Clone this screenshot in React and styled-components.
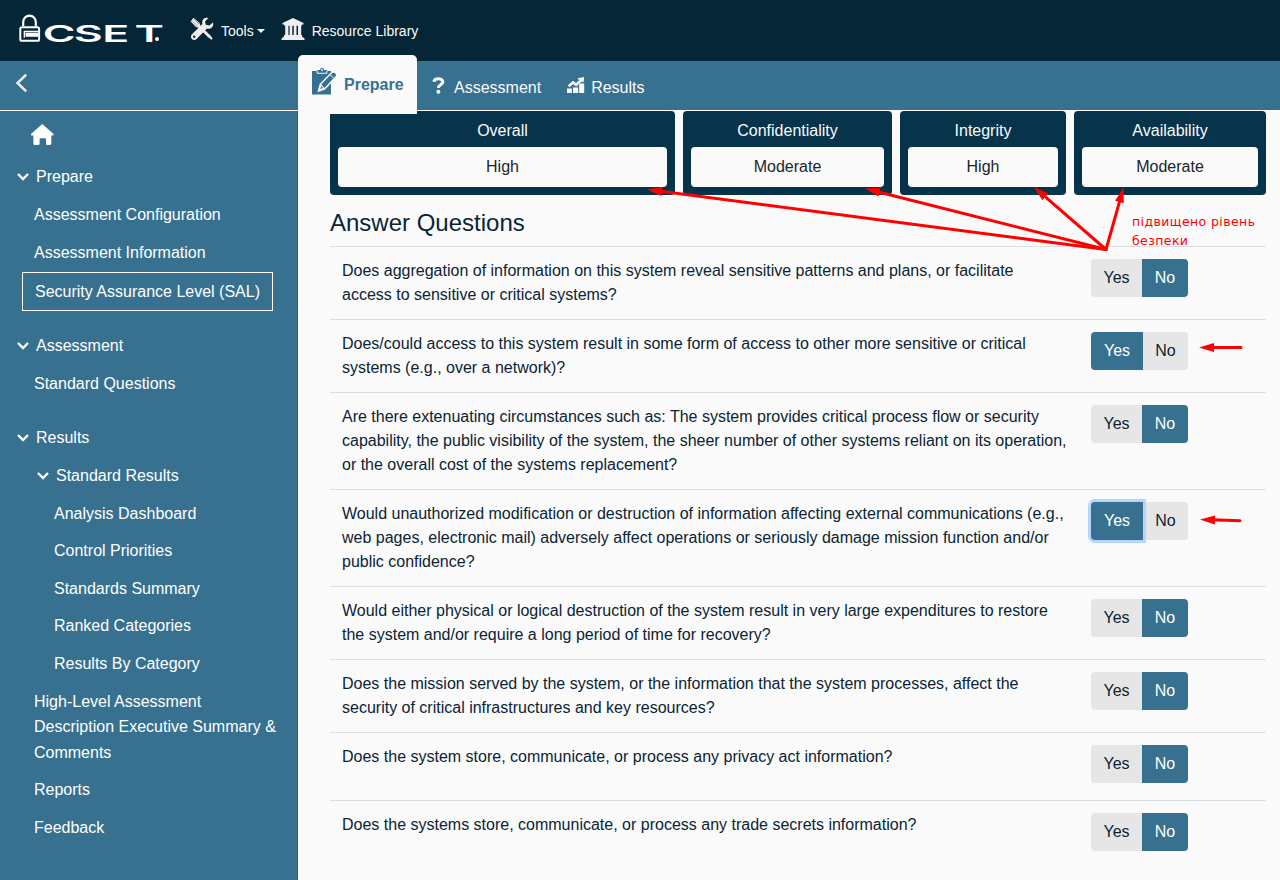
import React from "react";
import styled, { createGlobalStyle, css } from "styled-components";

const color = {
  header: "#042636",
  bar: "#37718f",
  card: "#07344b",
  page: "#fafafa",
  ink: "#0b2434",
  grey: "#e6e6e6",
  rule: "#dcdfe2",
  mark: "#ff0000",
};

const GlobalStyle = createGlobalStyle`
  *, *::before, *::after { box-sizing: border-box; }
  body {
    margin: 0;
    background: ${color.page};
    color: ${color.ink};
    font: 16px/24px "Liberation Sans", Arial, sans-serif;
  }
  svg { display: block; flex: none; }
`;

const Page = styled.div`
  position: relative;
  display: flex;
  flex-direction: column;
  width: 1280px;
  height: 880px;
  overflow: hidden;
`;

const Header = styled.header`
  display: flex;
  align-items: center;
  height: 61px;
  padding-left: 18px;
  background: ${color.header};
  color: ${color.page};
  font-size: 14px;
`;

const HeaderLink = styled.a`
  display: flex;
  align-items: center;
  height: 61px;
  padding-left: ${(p) => p.$left}px;
  gap: ${(p) => p.$gap}px;
  white-space: nowrap;
`;

const HeaderIcon = styled.span`
  padding-bottom: 3px;
`;

const Caret = styled.span`
  margin: 1px 0 0 3px;
  border: 4px solid transparent;
  border-top-color: ${color.page};
  border-bottom: 0;
`;

const ToolsLabel = styled.span`
  display: flex;
  align-items: center;
`;

const Bar = styled.nav`
  display: flex;
  height: 50px;
  background: ${color.bar};
  border-bottom: 1px solid #fff;
  color: ${color.page};
`;

const Collapse = styled.div`
  width: 298px;
  padding: 12px 0 0 15px;
`;

const Tab = styled.div`
  display: flex;
  align-items: center;
  height: 49px;
  gap: ${(p) => p.$gap}px;
  padding: 4px 0 0 ${(p) => p.$left}px;
  ${(p) =>
    p.$active &&
    css`
      z-index: 1;
      width: 119px;
      height: 59px;
      margin-top: -6px;
      padding-top: 0;
      border-radius: 5px 5px 0 0;
      background: ${color.page};
      color: ${color.bar};
      font-weight: bold;
    `}
`;

const TabIcon = styled.span`
  padding-bottom: ${(p) => p.$lift}px;
`;

const Body = styled.div`
  display: flex;
  flex: 1;
  min-height: 0;
`;

const Sidebar = styled.aside`
  width: 298px;
  padding-top: 12px;
  background: ${color.bar};
  border-right: 1px solid #2d6683;
  color: #fff;
  line-height: 25.6px;
`;

const HomeLink = styled.div`
  height: 35.2px;
  padding: 1px 0 0 30px;
`;

const NavGroup = styled.div`
  display: flex;
  align-items: center;
  gap: 6px;
  height: 38px;
  margin-top: ${(p) => p.$gap || 0}px;
  padding-left: ${(p) => 16 + (p.$depth || 0) * 20}px;
`;

const NavItem = styled.div`
  padding: 6px 12px 6px ${(p) => 34 + (p.$depth || 0) * 20}px;
`;

const NavSelected = styled.div`
  width: 251px;
  height: 39px;
  margin: 0.6px 0 0 22px;
  padding: 6px 12px;
  border: 1px solid #fff;
  white-space: nowrap;
`;

const Main = styled.main`
  width: 982px;
  padding: 0 14px 0 32px;
`;

const Levels = styled.div`
  display: grid;
  grid-template-columns: 345px 209px 166px 192px;
  gap: 8px;
`;

const LevelCard = styled.section`
  height: 84px;
  padding: 8px;
  border-radius: 4px;
  background: ${color.card};
  color: ${color.page};
  text-align: center;
`;

const LevelValue = styled.div`
  height: 40px;
  margin-top: 4px;
  border-radius: 4px;
  background: ${color.page};
  color: #212529;
  line-height: 39px;
`;

const Title = styled.h2`
  height: 51px;
  margin: 0;
  padding-top: 13px;
  font-size: 24px;
  font-weight: normal;
  line-height: 30px;
`;

const Question = styled.div`
  display: flex;
  align-items: flex-start;
  min-height: 68px;
  padding: 12px 0 12px 12px;
  border-top: 1px solid ${color.rule};
`;

const QuestionText = styled.div`
  width: 749px;
  white-space: nowrap;
`;

const Toggle = styled.div`
  display: flex;
  height: 38px;
`;

const Choice = styled.button`
  width: ${(p) => p.$width}px;
  padding: 0;
  border: 0;
  border-radius: ${(p) => (p.$end ? "0 4px 4px 0" : "4px 0 0 4px")};
  background: ${(p) => (p.$on ? color.bar : color.grey)};
  color: ${(p) => (p.$on ? "#fff" : color.ink)};
  font: inherit;
  box-shadow: ${(p) => (p.$focus ? "0 0 0 3px #b4d6fb" : "none")};
  z-index: ${(p) => (p.$focus ? 1 : 0)};
`;

const Marks = styled.svg`
  position: absolute;
  inset: 0;
  z-index: 2;
  pointer-events: none;
`;

const Note = styled.div`
  position: absolute;
  left: 1132px;
  top: 212px;
  z-index: 2;
  color: ${color.mark};
  font: 12.5px/19px "DejaVu Sans", sans-serif;
  letter-spacing: 0.4px;
  white-space: pre;
`;

const LogoMark = styled.svg`
  margin-right: -8px;
  overflow: visible;
`;

const Logo = () => (
  <LogoMark width="154" height="36" viewBox="0 -3 154 36" fill="none">
    <path d="M5.2 10V6a6.3 6.3 0 0 1 12.6 0v4" stroke="#fff" strokeWidth="2.2" />
    <rect x="2.3" y="11.2" width="18.8" height="13.6" rx="1.6" stroke="#fff" strokeWidth="2" />
    <path d="M22 15.5H6.3v6.3" stroke="#fff" strokeWidth="1.3" />
    <rect x="7.5" y="16.8" width="12.5" height="4" fill="#fff" />
    <text transform="scale(1.9 1)" x="13.1 29.4 44.4 61.3" y="26" fill="#fff" fontFamily="Inter, sans-serif" fontWeight="600" fontSize="23.5">CSET</text>
    <circle cx="139" cy="23" r="2" fill="#fff" />
  </LogoMark>
);

const ToolsIcon = () => (
  <svg width="24" height="24" viewBox="0 0 24 24">
    <path d="M3.5.8 9.5 6l1.2 3 10 9.8 2 2.9-1.1 1.1-3.5-2.5-9.6-9.6-2.8-.9L.7 4.5Z" fill="#eee" />
    <path d="m2.3 3.8 5 5M4.1 2.1l5 5" stroke="#7d8b92" strokeWidth=".8" />
    <path d="M22.9 5.4 19.3 8.6 15.8 7.8 15 4.5 18.4 1.1C14.5-.2 11.3 3.1 12.4 7L2 17.3c-3.1 3.2 1.4 7.7 4.6 4.6L17 11.5c3.9 1.1 7.3-2.2 5.9-6.1Z" fill="#eee" />
    <circle cx="4.2" cy="19.7" r="1.2" fill={color.header} />
  </svg>
);

const LibraryIcon = () => (
  <svg width="24" height="23" viewBox="0 0 24 23" fill="#eee">
    <path d="M12 0 22.5 5v1.5h-21V5ZM3.3 6.5h17.5v1.3H3.3ZM4.2 7.5h3.2v10H4.2ZM8.6 7.5h2.7v10H8.6ZM12.8 7.5h2.7v10h-2.7ZM17 7.5h3.2v10H17ZM3 17h18v1.5l2.5 2V22H.5v-1.5L3 18.5Z" />
  </svg>
);

const PrepareIcon = () => (
  <svg width="26" height="27" viewBox="0 0 26 27">
    <path d="M0 3h5V2h3a2 2 0 0 1 4 0h3v1h4v23.5H0Z" fill={color.bar} />
    <path d="M5.3 2.8v2.5h9.5V2.8" fill="none" stroke={color.page} />
    <circle cx="10" cy="2" r=".9" fill={color.page} />
    <path d="m6.5 23 1.8-6.7L20 4.3q2-1 4 .8 1.5 2 0 3.6L12.7 20.8Z" fill={color.bar} stroke={color.page} strokeWidth="1.5" />
    <path d="m8.7 16.3 3.5 4.2L7 22.5ZM18.5 7l3.3 3.4" fill={color.page} stroke={color.page} strokeWidth="1" />
    <path d="m9.2 18 1.8 2-2.6 1Z" fill={color.bar} />
  </svg>
);

const QuestionIcon = () => (
  <svg width="13" height="17" viewBox="0 0 13 17" fill="none">
    <path d="M1.8 4.8Q2.4 1.7 6.1 1.7c5.5 0 5.8 4.4 2.4 6.1Q6.4 8.9 6.4 11" stroke="#fafafa" strokeWidth="3.1" />
    <circle cx="6.4" cy="14.7" r="2" fill="#fafafa" />
  </svg>
);

const ResultsIcon = () => (
  <svg width="18" height="17" viewBox="0 0 18 17" fill="#fafafa">
    <path d="M0 11.5h4.9V16H0ZM6 10.5h5.2V16H6ZM12.2 6.5h5V16h-5Z" />
    <path d="m.8 8.2 5.2-4.4 3 2.1 3.2-2.7-1.7-1.9L17.2 0l-.7 5.6-1.6-1.1L9.3 9.6 6.2 7.3 2.4 10.2Z" />
  </svg>
);

const HomeIcon = () => (
  <svg width="24" height="22" viewBox="0 0 24 22" fill="#fff">
    <path d="M12.3 0 23.3 9.8c.8.9.3 1.7-.8 1.7h-1.2v7.9q0 1.6-1.6 1.6h-2.4q-1.3 0-1.3-1.5v-4.1q0-1.2-1.2-1.2h-4q-1.2 0-1.2 1.2v4.1q0 1.5-1.3 1.5H5q-1.6 0-1.6-1.6v-7.9H2c-1.1 0-1.5-.9-.7-1.7Z" />
  </svg>
);

const Chevron = () => (
  <svg width="14" height="10" viewBox="0 0 14 10" fill="none">
    <path d="m2 2 5 5 5-5" stroke="#fff" strokeWidth="2.4" />
  </svg>
);

const BackIcon = () => (
  <svg width="14" height="20" viewBox="0 0 14 20" fill="none">
    <path d="M11.2 1.7 2.5 10l8.7 8.3" stroke="#eee" strokeWidth="2.5" />
  </svg>
);

// Each arrow: tail x/y followed by tip x/y.
const arrows = [
  [1106, 249.5, 647, 189.5],
  [1106, 249.5, 865, 188.5],
  [1106, 249.5, 1034, 187],
  [1106, 249.5, 1123.5, 187.5],
  [1241, 347.5, 1199, 347.5],
  [1240, 520.7, 1200, 519.5],
];

const Arrow = ({ from: [x1, y1, x2, y2] }) => {
  const len = Math.hypot(x2 - x1, y2 - y1);
  const angle = (Math.atan2(y2 - y1, x2 - x1) * 180) / Math.PI;
  return (
    <g transform={`translate(${x1} ${y1}) rotate(${angle})`} fill={color.mark} stroke="none">
      <path d={`M0 0H${len - 12}`} stroke={color.mark} strokeWidth="3" strokeLinecap="round" />
      <path d={`M${len} 0 ${len - 15} -4.5V4.5Z`} />
    </g>
  );
};

const levels = [
  ["Overall", "High"],
  ["Confidentiality", "Moderate"],
  ["Integrity", "High"],
  ["Availability", "Moderate"],
];

const questions = [
  { lines: ["Does aggregation of information on this system reveal sensitive patterns and plans, or facilitate", "access to sensitive or critical systems?"] },
  { lines: ["Does/could access to this system result in some form of access to other more sensitive or critical", "systems (e.g., over a network)?"], yes: true },
  { lines: ["Are there extenuating circumstances such as: The system provides critical process flow or security", "capability, the public visibility of the system, the sheer number of other systems reliant on its operation,", "or the overall cost of the systems replacement?"] },
  { lines: ["Would unauthorized modification or destruction of information affecting external communications (e.g.,", "web pages, electronic mail) adversely affect operations or seriously damage mission function and/or", "public confidence?"], yes: true, focus: true },
  { lines: ["Would either physical or logical destruction of the system result in very large expenditures to restore", "the system and/or require a long period of time for recovery?"] },
  { lines: ["Does the mission served by the system, or the information that the system processes, affect the", "security of critical infrastructures and key resources?"] },
  { lines: ["Does the system store, communicate, or process any privacy act information?"] },
  { lines: ["Does the systems store, communicate, or process any trade secrets information?"] },
];

export default function App() {
  return (
    <Page>
      <GlobalStyle />
      <Header>
        <Logo />
        <HeaderLink $left={26} $gap={7}>
          <HeaderIcon><ToolsIcon /></HeaderIcon>
          <ToolsLabel>Tools<Caret /></ToolsLabel>
        </HeaderLink>
        <HeaderLink $left={16} $gap={7}>
          <HeaderIcon><LibraryIcon /></HeaderIcon>
          Resource Library
        </HeaderLink>
      </Header>
      <Bar>
        <Collapse><BackIcon /></Collapse>
        <Tab $active $left={14} $gap={6}>
          <TabIcon $lift={7}><PrepareIcon /></TabIcon>
          Prepare
        </Tab>
        <Tab $left={15} $gap={9}>
          <TabIcon $lift={4}><QuestionIcon /></TabIcon>
          Assessment
        </Tab>
        <Tab $left={26} $gap={6}>
          <TabIcon $lift={4}><ResultsIcon /></TabIcon>
          Results
        </Tab>
      </Bar>
      <Body>
        <Sidebar>
          <HomeLink><HomeIcon /></HomeLink>
          <NavGroup><Chevron />Prepare</NavGroup>
          <NavItem>Assessment Configuration</NavItem>
          <NavItem>Assessment Information</NavItem>
          <NavSelected>Security Assurance Level (SAL)</NavSelected>
          <NavGroup $gap={15.7}><Chevron />Assessment</NavGroup>
          <NavItem>Standard Questions</NavItem>
          <NavGroup $gap={16.4}><Chevron />Results</NavGroup>
          <NavGroup $depth={1}><Chevron />Standard Results</NavGroup>
          <NavItem $depth={1}>Analysis Dashboard</NavItem>
          <NavItem $depth={1}>Control Priorities</NavItem>
          <NavItem $depth={1}>Standards Summary</NavItem>
          <NavItem $depth={1}>Ranked Categories</NavItem>
          <NavItem $depth={1}>Results By Category</NavItem>
          <NavItem>High-Level Assessment Description Executive Summary &amp; Comments</NavItem>
          <NavItem>Reports</NavItem>
          <NavItem>Feedback</NavItem>
        </Sidebar>
        <Main>
          <Levels>
            {levels.map(([name, value]) => (
              <LevelCard key={name}>
                {name}
                <LevelValue>{value}</LevelValue>
              </LevelCard>
            ))}
          </Levels>
          <Title>Answer Questions</Title>
          {questions.map((q) => (
            <Question key={q.lines[0]}>
              <QuestionText>
                {q.lines.map((line) => (
                  <div key={line}>{line}</div>
                ))}
              </QuestionText>
              <Toggle>
                <Choice $width={q.yes ? 52 : 51} $on={q.yes} $focus={q.focus}>Yes</Choice>
                <Choice $width={q.yes ? 45 : 46} $on={!q.yes} $end>No</Choice>
              </Toggle>
            </Question>
          ))}
        </Main>
      </Body>
      <Marks width="1280" height="880">
        {arrows.map((a) => (
          <Arrow key={a.join()} from={a} />
        ))}
      </Marks>
      <Note>{"підвищено рівень\nбезпеки"}</Note>
    </Page>
  );
}
